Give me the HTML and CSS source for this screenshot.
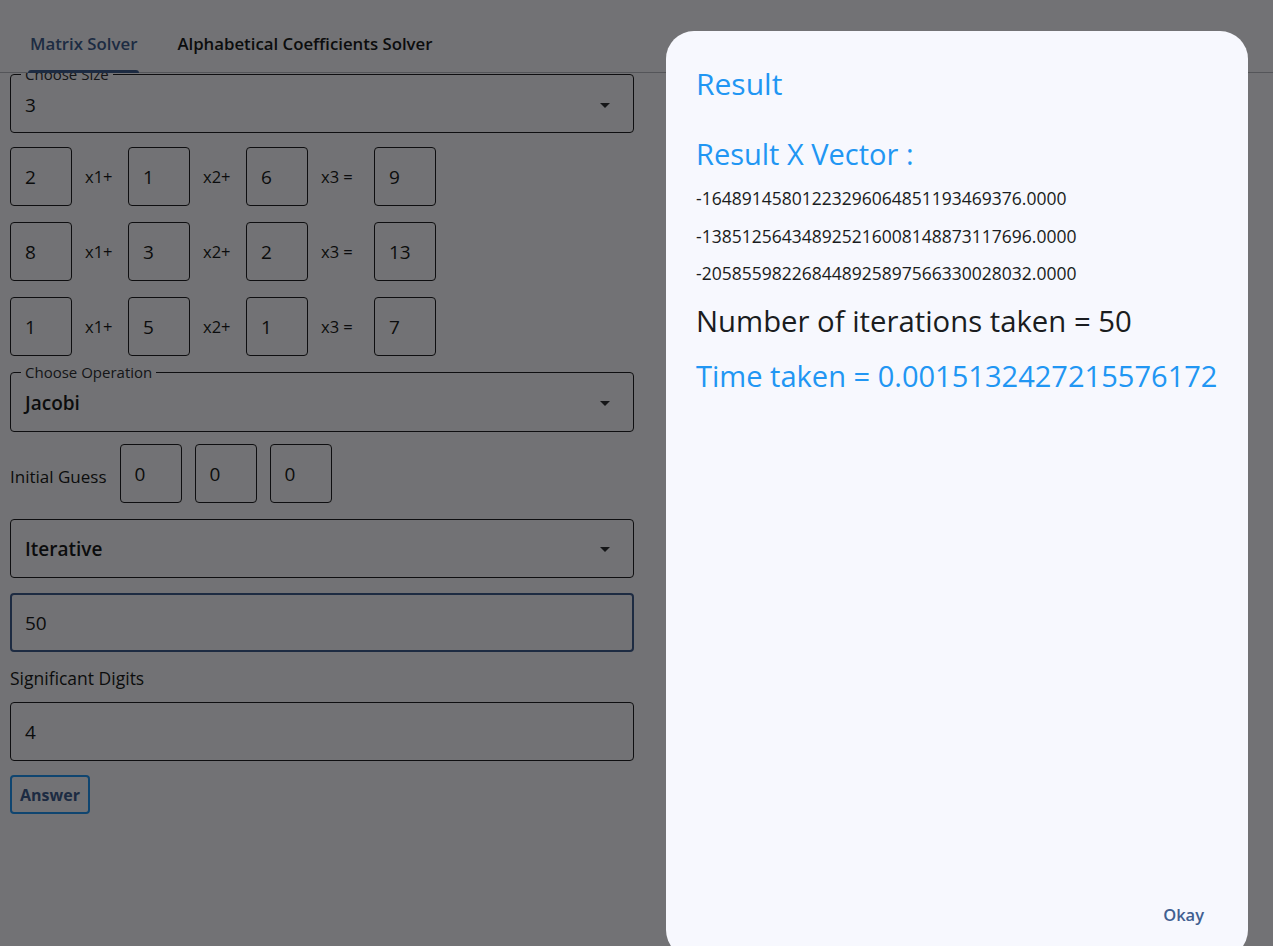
FILE: index.html
```html
<!DOCTYPE html>
<html lang="en">
<head>
<meta charset="utf-8">
<title>Matrix Solver</title>
<link rel="stylesheet" href="styles.css">
</head>
<body>
<div class="app">
  <header class="tabbar">
    <div class="tab active"><span class="tab-label">Matrix Solver</span></div>
    <div class="tab"><span class="tab-label">Alphabetical Coefficients Solver</span></div>
  </header>

  <main class="form">
    <fieldset class="outlined select size-field">
      <legend>Choose Size</legend>
      <div class="field-inner">
        <span class="value">3</span>
        <svg class="caret" width="24" height="24" viewBox="0 0 24 24"><path d="M7 10l5 5 5-5z"/></svg>
      </div>
    </fieldset>

    <div class="equations">
      <div class="eq-row">
        <div class="cell">2</div><span class="op op-1">x1+</span>
        <div class="cell">1</div><span class="op op-2">x2+</span>
        <div class="cell">6</div><span class="op op-3">x3 =</span>
        <div class="cell">9</div>
      </div>
      <div class="eq-row">
        <div class="cell">8</div><span class="op op-1">x1+</span>
        <div class="cell">3</div><span class="op op-2">x2+</span>
        <div class="cell">2</div><span class="op op-3">x3 =</span>
        <div class="cell">13</div>
      </div>
      <div class="eq-row">
        <div class="cell">1</div><span class="op op-1">x1+</span>
        <div class="cell">5</div><span class="op op-2">x2+</span>
        <div class="cell">1</div><span class="op op-3">x3 =</span>
        <div class="cell">7</div>
      </div>
    </div>

    <fieldset class="outlined select op-field">
      <legend>Choose Operation</legend>
      <div class="field-inner">
        <span class="value strong">Jacobi</span>
        <svg class="caret" width="24" height="24" viewBox="0 0 24 24"><path d="M7 10l5 5 5-5z"/></svg>
      </div>
    </fieldset>

    <div class="guess-row">
      <span class="guess-label">Initial Guess</span>
      <div class="cell">0</div>
      <div class="cell">0</div>
      <div class="cell">0</div>
    </div>

    <div class="box select iter-field">
      <span class="value strong">Iterative</span>
      <svg class="caret" width="24" height="24" viewBox="0 0 24 24"><path d="M7 10l5 5 5-5z"/></svg>
    </div>

    <div class="box focused iter-count">
      <span class="value">50</span>
    </div>

    <div class="plain-label">Significant Digits</div>

    <div class="box digits-field">
      <span class="value">4</span>
    </div>

    <button class="answer-btn" type="button">Answer</button>
  </main>
</div>

<div class="scrim">
  <section class="dialog">
    <h2 class="dialog-title">Result</h2>
    <h3 class="vector-title">Result X Vector :</h3>
    <div class="vector-lines">
      <p class="vector-line">-16489145801223296064851193469376.0000</p>
      <p class="vector-line">-13851256434892521600814887311769<span></span>6.0000</p>
      <p class="vector-line">-20585598226844892589756633002803<span></span>2.0000</p>
    </div>
    <p class="stat">Number of iterations taken = 50</p>
    <p class="stat blue">Time taken = 0.0015132427215576172</p>
    <div class="dialog-actions">
      <button class="text-btn" type="button">Okay</button>
    </div>
  </section>
</div>
</body>
</html>
```

FILE: styles.css
```css
* {
  box-sizing: border-box;
}

html, body {
  margin: 0;
  padding: 0;
  height: 100%;
}

body {
  background: #f9f9ff;
  color: #1a1c20;
  font-family: "Open Sans", "Noto Sans", sans-serif;
  overflow: hidden;
}

/* ---------- tabs ---------- */
.tabbar {
  position: relative;
  z-index: 2;
  display: flex;
  height: 73px;
  padding-left: 10px;
  background: #f9f9ff;
  border-bottom: 1px solid #b8bac2;
}

.tab {
  position: relative;
  padding: 33px 20px 0;
  font-size: 16.8px;
  font-weight: 600;
  line-height: 22px;
  color: #1a1c20;
}

.tab.active {
  color: #415f91;
}

.tab.active::after {
  content: "";
  position: absolute;
  left: 18px;
  right: 18px;
  bottom: -1px;
  height: 3px;
  border-radius: 3px 3px 0 0;
  background: #415f91;
}

/* ---------- form ---------- */
.form {
  display: flex;
  flex-direction: column;
  align-items: flex-start;
  padding: 0 10px;
  width: 644px;
}

.outlined {
  margin: 0;
  width: 624px;
  padding: 0 16px 0 14px;
  border: 1px solid #1f1f23;
  border-radius: 4px;
}

.outlined legend {
  margin-left: -4px;
  padding: 0 4px;
  font-size: 15px;
  line-height: 16px;
  color: #2f3136;
}

.size-field {
  margin-top: -7px;
}

.size-field .field-inner {
  height: 50px;
  padding-bottom: 4px;
}

.op-field {
  margin-top: 8px;
}

.op-field .field-inner {
  height: 51px;
  padding-bottom: 5px;
}

.field-inner {
  display: flex;
  align-items: center;
  justify-content: space-between;
}

.value {
  font-size: 19px;
  line-height: 24px;
  color: #1a1c20;
}

.value.strong {
  font-weight: 600;
}

.caret {
  fill: #2f3136;
  flex: none;
}

.box {
  display: flex;
  align-items: center;
  justify-content: space-between;
  width: 624px;
  height: 59px;
  padding: 0 16px 0 14px;
  border: 1px solid #1f1f23;
  border-radius: 4px;
}

.box.focused {
  border: 2px solid #415f91;
  padding-left: 13px;
}

.iter-field {
  margin-top: 16px;
}

.iter-count {
  margin-top: 15px;
}

.plain-label {
  margin-top: 15px;
  font-size: 17.5px;
  line-height: 22px;
  color: #1a1c20;
}

.digits-field {
  margin-top: 13px;
}

/* ---------- equations ---------- */
.equations {
  display: flex;
  flex-direction: column;
  gap: 16px;
  margin-top: 14px;
}

.eq-row {
  display: flex;
  align-items: center;
}

.cell {
  display: flex;
  align-items: center;
  width: 62px;
  height: 59px;
  padding-left: 14px;
  border: 1px solid #1f1f23;
  border-radius: 4px;
  font-size: 19px;
  color: #1a1c20;
  flex: none;
}

.op {
  padding-left: 13px;
  font-size: 16.5px;
  color: #1a1c20;
  flex: none;
}

.op-1, .op-2 {
  width: 56px;
}

.op-3 {
  width: 66px;
}

.guess-row {
  display: flex;
  align-items: center;
  gap: 13px;
  margin-top: 12px;
}

.guess-label {
  padding-top: 5px;
  font-size: 17px;
  color: #1a1c20;
}

.answer-btn {
  margin-top: 14px;
  height: 39px;
  padding: 0 8px;
  background: transparent;
  border: 2px solid #2196f3;
  border-radius: 4px;
  font-family: inherit;
  font-size: 16px;
  font-weight: 700;
  color: #415f91;
}

/* ---------- dialog ---------- */
.scrim {
  position: fixed;
  inset: 0;
  z-index: 10;
  display: flex;
  justify-content: flex-end;
  align-items: flex-start;
  padding: 31px 25px 0 0;
  background: rgba(0, 0, 0, 0.54);
}

.dialog {
  display: flex;
  flex-direction: column;
  width: 582px;
  height: 927px;
  flex: none;
  padding: 33px 0 24px 30px;
  background: #f7f8fe;
  border-radius: 28px;
}

.dialog-title {
  margin: 0;
  font-size: 30px;
  font-weight: 400;
  line-height: 40px;
  color: #2196f3;
}

.vector-title {
  margin: 32px 0 0;
  font-size: 29px;
  font-weight: 400;
  line-height: 36px;
  color: #2196f3;
}

.vector-lines {
  display: flex;
  flex-direction: column;
  gap: 15.5px;
  margin-top: 15px;
}

.vector-line {
  margin: 0;
  font-size: 17.5px;
  line-height: 22px;
  color: #1a1c20;
}

.stat {
  margin: 19px 0 0;
  font-size: 29.3px;
  line-height: 36px;
  color: #1a1c20;
}

.stat.blue {
  font-size: 29.05px;
  color: #2196f3;
}

.dialog-actions {
  display: flex;
  justify-content: flex-end;
  margin-top: auto;
  padding-right: 32px;
}

.text-btn {
  height: 40px;
  padding: 0 12px;
  background: transparent;
  border: none;
  font-family: inherit;
  font-size: 16.5px;
  font-weight: 600;
  color: #415f91;
}
```
